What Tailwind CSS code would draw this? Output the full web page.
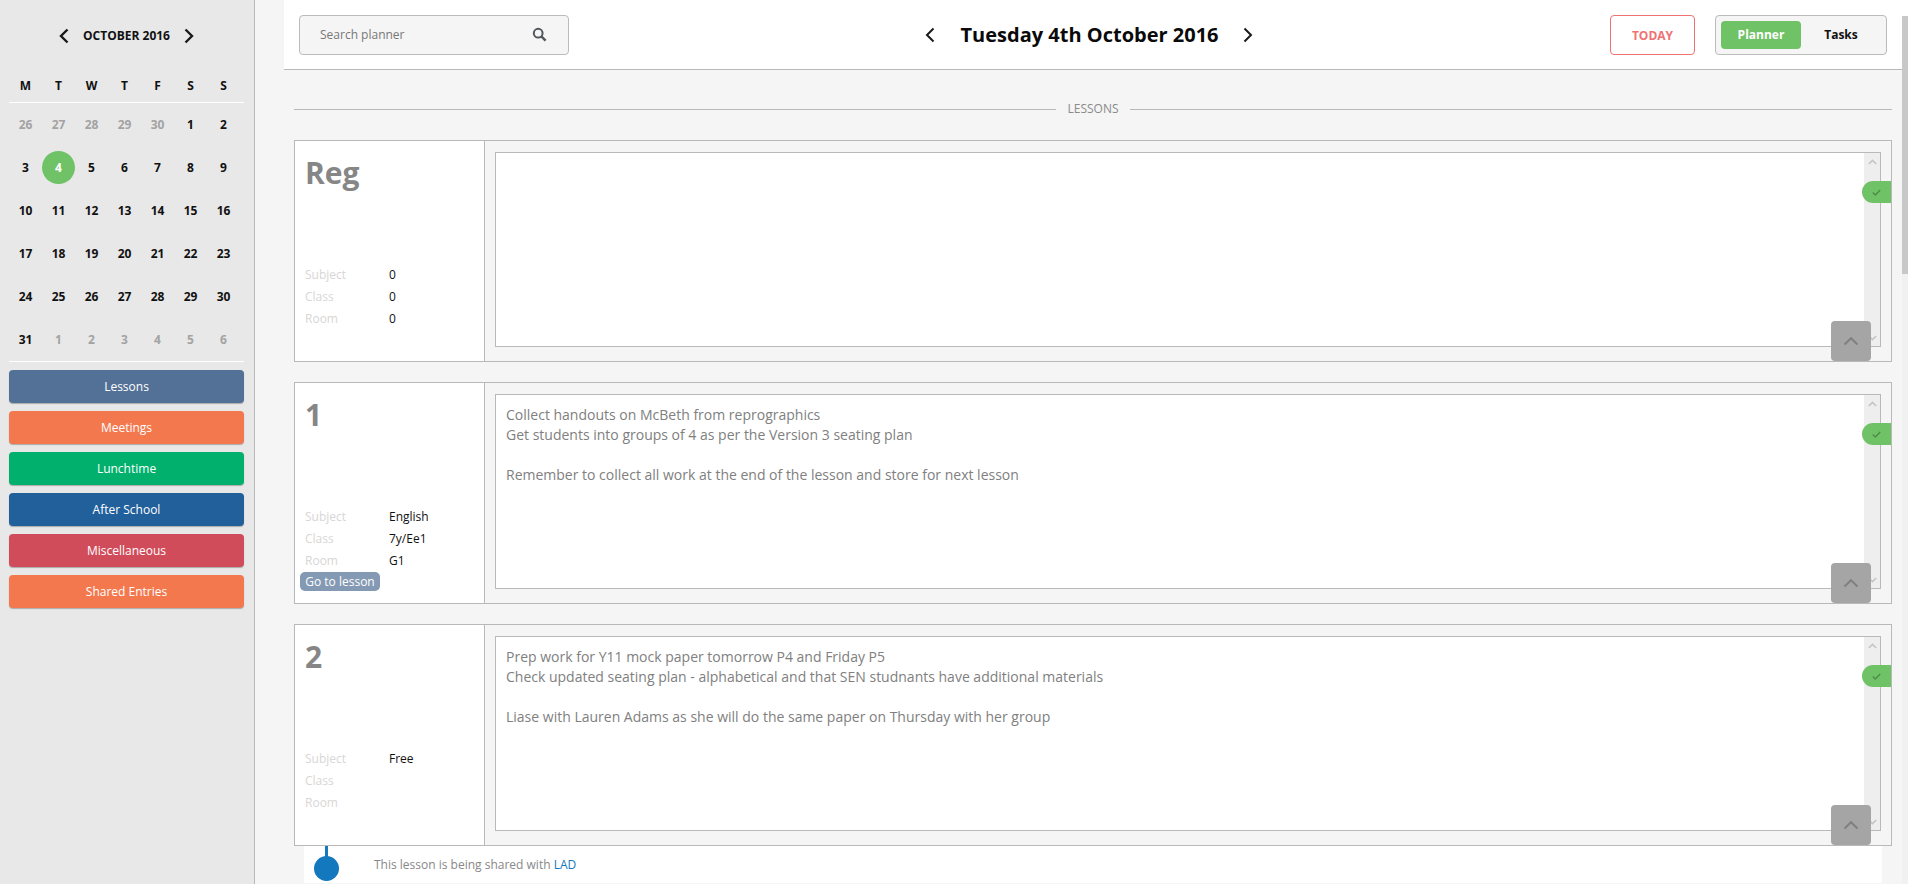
<!DOCTYPE html>
<html lang="en">
<head>
    <meta charset="UTF-8">
    <meta name="viewport" content="width=device-width, initial-scale=1.0">
    <title>Planner</title>
    <script src="https://cdn.jsdelivr.net/npm/@tailwindcss/browser@4"></script>
</head>
<body class="h-screen overflow-hidden flex bg-[#f5f5f5] [font-family:'Open_Sans',sans-serif]">
    <!-- sidebar -->
    <aside class="w-[255px] shrink-0 h-full bg-[#e8e8e8] border-r border-[#b9b9b9] px-[9px]">
        <div class="w-[235px] h-[70px] pt-[1px] flex items-center justify-center gap-[13px]">
            <svg class="w-[12px] h-[16px]" viewBox="0 0 12 16" fill="none" stroke="#1a1a1a" stroke-width="2.4"><path d="M9.5 1.5 3 8l6.500 6.500"/></svg>
            <span class="text-[12px] font-bold text-[#111]">OCTOBER 2016</span>
            <svg class="w-[12px] h-[16px]" viewBox="0 0 12 16" fill="none" stroke="#1a1a1a" stroke-width="2.4"><path d="M2.5 1.5 9 8l-6.500 6.500"/></svg>
        </div>
        <div id="weekdays" class="grid grid-cols-7 w-[235px] pr-[4px] h-[33px] items-center text-center text-[12px] font-bold text-[#111] border-b border-white"></div>
        <div id="days" class="grid grid-cols-7 grid-rows-6 w-[235px] pr-[4px] h-[259px] border-b border-white"></div>
        <nav class="mt-[8px] w-[235px] flex flex-col gap-[8px] text-[12px] text-white text-center">
            <a class="h-[33px] leading-[33px] rounded-[4px] bg-[#537196] shadow-[0_1px_1px_#aaa]">Lessons</a>
            <a class="h-[33px] leading-[33px] rounded-[4px] bg-[#f4784e] shadow-[0_1px_1px_#aaa]">Meetings</a>
            <a class="h-[33px] leading-[33px] rounded-[4px] bg-[#00b06c] shadow-[0_1px_1px_#aaa]">Lunchtime</a>
            <a class="h-[33px] leading-[33px] rounded-[4px] bg-[#22609c] shadow-[0_1px_1px_#aaa]">After School</a>
            <a class="h-[33px] leading-[33px] rounded-[4px] bg-[#d14c5b] shadow-[0_1px_1px_#aaa]">Miscellaneous</a>
            <a class="h-[33px] leading-[33px] rounded-[4px] bg-[#f4784e] shadow-[0_1px_1px_#aaa]">Shared Entries</a>
        </nav>
    </aside>

    <main class="flex-1 min-w-0 h-full">
        <!-- top bar -->
        <header class="ml-[29px] h-[70px] bg-white border-b border-[#b9b9b9] flex items-center pl-[15px] pr-[15px] relative">
            <div class="w-[270px] h-[40px] rounded-[4px] border border-[#bbb] bg-[#f5f5f5] flex items-center justify-between pl-[20px] pr-[21px] text-[12px] text-[#777]">
                <span class="pt-[1px]">Search planner</span>
                <svg class="w-[15px] h-[15px]" viewBox="0 0 15 15" fill="none" stroke="#50565c" stroke-width="2"><circle cx="6.2" cy="6.2" r="4.4"/><path d="m9.6 9.6 4 4" stroke-width="2.4"/></svg>
            </div>
            <div class="flex-1 flex items-center justify-center gap-[26px] pr-[2px]">
                <svg class="w-[10px] h-[16px]" viewBox="0 0 10 16" fill="none" stroke="#1a1a1a" stroke-width="2"><path d="M8.5 1.5 2 8l6.500 6.500"/></svg>
                <h1 class="text-[20px] font-bold text-[#0a0a0a] w-[256px] text-center whitespace-nowrap">Tuesday 4th October 2016</h1>
                <svg class="w-[10px] h-[16px]" viewBox="0 0 10 16" fill="none" stroke="#1a1a1a" stroke-width="2"><path d="M1.5 1.5 8 8l-6.500 6.500"/></svg>
            </div>
            <button class="w-[85px] h-[40px] pt-[2px] rounded-[4px] border border-[#ef7273] text-[12px] font-bold text-[#ef7273]">TODAY</button>
            <div class="ml-[20px] w-[172px] h-[40px] rounded-[4px] border border-[#bbb] bg-[#f5f5f5] flex items-center pl-[5px] text-[12px] font-bold">
                <span class="w-[80px] h-[28px] leading-[28px] text-center rounded-[4px] bg-[#6fc266] text-white">Planner</span>
                <span class="w-[80px] text-center text-[#111]">Tasks</span>
            </div>
        </header>

        <div class="pl-[39px] pr-[10px]">
            <div class="h-[70px] pt-[8px] flex items-center gap-[11px] text-[12px] text-[#8a8a8a]">
                <div class="flex-1 border-t border-[#b9b9b9]"></div>
                <span>LESSONS</span>
                <div class="flex-1 border-t border-[#b9b9b9]"></div>
            </div>
            <div id="lessons" class="flex flex-col gap-[20px]"></div>
            <div class="mx-[10px] h-[37px] bg-white flex items-center relative text-[12px] text-[#888] pl-[70px]">
                <span class="absolute left-[21px] top-0 w-[3px] h-[12px] bg-[#1478bf]"></span>
                <span class="absolute left-[10px] top-[10px] w-[25px] h-[25px] rounded-full bg-[#1478bf]"></span>
                <span>This lesson is being shared with <a class="text-[#1478bf]">LAD</a></span>
            </div>
        </div>
    </main>

    <!-- page scrollbar -->
    <div class="w-[6px] shrink-0 h-full bg-[#f1f1f1] flex flex-col">
        <div class="h-[16px] bg-white"></div>
        <div class="h-[258px] bg-[#c8c8c8]"></div>
    </div>

    <script>
        const weekdays = ['M', 'T', 'W', 'T', 'F', 'S', 'S'];
        const days = [
            [26, 1], [27, 1], [28, 1], [29, 1], [30, 1], [1], [2],
            [3], [4, 0, 1], [5], [6], [7], [8], [9],
            [10], [11], [12], [13], [14], [15], [16],
            [17], [18], [19], [20], [21], [22], [23],
            [24], [25], [26], [27], [28], [29], [30],
            [31], [1, 1], [2, 1], [3, 1], [4, 1], [5, 1], [6, 1]
        ];

        document.getElementById('weekdays').innerHTML = weekdays.map(d => `<span>${d}</span>`).join('');

        document.getElementById('days').innerHTML = days.map(([n, muted, today]) => {
            if (today) {
                return `<div class="flex items-center justify-center"><span class="w-[33px] h-[33px] rounded-full bg-[#6fc266] text-white text-[12px] font-bold flex items-center justify-center">${n}</span></div>`;
            }
            const color = muted ? 'text-[#a3a3a3]' : 'text-[#111]';
            return `<div class="flex items-center justify-center text-[12px] font-bold ${color}">${n}</div>`;
        }).join('');

        const lessons = [
            { title: 'Reg', subject: '0', cls: '0', room: '0', lines: [] },
            { title: '1', subject: 'English', cls: '7y/Ee1', room: 'G1', link: true, lines: [
                'Collect handouts on McBeth from reprographics',
                'Get students into groups of 4 as per the Version 3 seating plan',
                '',
                'Remember to collect all work at the end of the lesson and store for next lesson'
            ] },
            { title: '2', subject: 'Free', cls: '', room: '', lines: [
                'Prep work for Y11 mock paper tomorrow P4 and Friday P5',
                'Check updated seating plan - alphabetical and that SEN studnants have additional materials',
                '',
                'Liase with Lauren Adams as she will do the same paper on Thursday with her group'
            ] }
        ];

        function detailRow(label, value) {
            return `<div class="flex h-[22px] items-center text-[12px]"><span class="w-[89px] pl-[5px] text-[#d8d6d6]">${label}</span><span class="text-[#111]">${value}</span></div>`;
        }

        document.getElementById('lessons').innerHTML = lessons.map(l => `
            <section class="h-[222px] border border-[#b9b9b9] flex relative">
                <div class="w-[190px] shrink-0 bg-white border-r border-[#b9b9b9] px-[5px]">
                    <div class="h-[123px] pl-[5px] pt-[11px] text-[30px] leading-[42px] font-bold text-[#868686]">${l.title}</div>
                    ${detailRow('Subject', l.subject)}
                    ${detailRow('Class', l.cls)}
                    ${detailRow('Room', l.room)}
                    ${l.link ? '<a class="block w-[80px] h-[19px] leading-[19px] text-center text-[12px] rounded-[5px] bg-[#8499b3] text-white">Go to lesson</a>' : ''}
                </div>
                <div class="flex-1 p-[11px_10px_14px_10px]">
                    <div class="h-full bg-white border border-[#b9b9b9] flex">
                        <div class="flex-1 px-[10px] pt-[10px] text-[14px] leading-[20px] text-[#808080]">${l.lines.map(t => `<div class="h-[20px]">${t}</div>`).join('')}</div>
                        <div class="w-[16px] bg-[#eeeeee] flex flex-col justify-between items-center py-[6px]">
                            <svg class="w-[9px] h-[6px]" viewBox="0 0 9 6" fill="none" stroke="#c4c4c4" stroke-width="1.6"><path d="M.8 5 4.5 1.4 8.2 5"/></svg>
                            <svg class="w-[9px] h-[6px] -mb-[1px]" viewBox="0 0 9 6" fill="none" stroke="#c4c4c4" stroke-width="1.6"><path d="M.8 1 4.5 4.6 8.2 1"/></svg>
                        </div>
                    </div>
                </div>
                <div class="absolute right-0 top-[40px] w-[29px] h-[22px] rounded-l-full bg-[#6fc266] flex items-center justify-center">
                    <svg class="w-[9px] h-[7px] mr-[1px]" viewBox="0 0 9 7" fill="none" stroke="#4f8a49" stroke-width="1.4"><path d="m.8 3.600 2.500 2.400L8.200 1"/></svg>
                </div>
                <div class="absolute right-[20px] bottom-0 w-[40px] h-[40px] rounded-[4px] bg-[#a5a5a5] flex items-center justify-center">
                    <svg class="w-[16px] h-[10px]" viewBox="0 0 16 10" fill="none" stroke="#808080" stroke-width="2"><path d="M1.500 8.500 8 2.200l6.500 6.300"/></svg>
                </div>
            </section>`).join('');
    </script>
</body>
</html>
